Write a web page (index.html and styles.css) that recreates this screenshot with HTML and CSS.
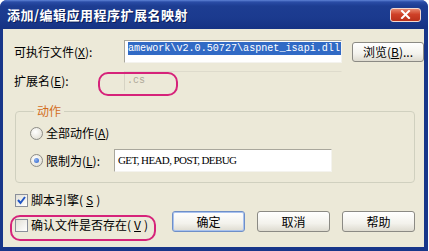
FILE: index.html
```html
<!DOCTYPE html>
<html lang="zh-CN">
<head>
    <meta charset="UTF-8">
    <title>添加/编辑应用程序扩展名映射</title>
    <link rel="stylesheet" href="styles.css">
</head>
<body>
    <div class="window">
        <!-- 标题栏 -->
        <div class="titlebar">
            <span class="title">添加/编辑应用程序扩展名映射</span>
            <button class="close-btn">
                <svg width="11" height="9" viewBox="0 0 11 9">
                    <path d="M2 1 L9 8 M9 1 L2 8" stroke="#fff" stroke-width="2" stroke-linecap="square"/>
                </svg>
            </button>
        </div>

        <!-- 客户区 -->
        <div class="client">
            <div class="form-row row-exe">
                <label class="label">可执行文件(<u>X</u>):</label>
                <div class="edit edit-exe"><span class="selected">amework\v2.0.50727\aspnet_isapi.dll</span></div>
                <button class="btn">浏览(<u>B</u>)...</button>
            </div>

            <div class="form-row row-ext">
                <label class="label">扩展名(<u>E</u>):</label>
                <div class="edit edit-disabled">.cs</div>
            </div>

            <fieldset class="group">
                <legend>动作</legend>
                <div class="radio-row">
                    <span class="radio"></span>
                    <span class="radio-label">全部动作(<u>A</u>)</span>
                </div>
                <div class="radio-row row-verbs">
                    <span class="radio checked"></span>
                    <span class="radio-label fixed">限制为(<u>L</u>):</span>
                    <div class="edit edit-verbs">GET, HEAD, POST, DEBUG</div>
                </div>
            </fieldset>

            <div class="check-row">
                <span class="checkbox">
                    <svg width="11" height="11" viewBox="0 0 11 11">
                        <path d="M2 5 L4.5 8 L9 2" fill="none" stroke="#2155c4" stroke-width="2"/>
                    </svg>
                </span>
                脚本引擎(<u>S</u>)
            </div>

            <div class="bottom-row">
                <div class="check-row verify">
                    <span class="checkbox"></span>
                    确认文件是否存在(<u>V</u>)
                </div>
                <div class="buttons">
                    <button class="btn btn-default">确定</button>
                    <button class="btn">取消</button>
                    <button class="btn">帮助</button>
                </div>
            </div>

            <!-- 标注圈 -->
            <span class="mark mark-ext"></span>
            <span class="mark mark-verify"></span>
        </div>
    </div>
</body>
</html>
```

FILE: styles.css
```css
* {
    margin: 0;
    padding: 0;
    box-sizing: border-box;
}

body {
    background-color: #ffffff;
    font-family: "Noto Sans CJK SC", sans-serif;
    font-size: 12px;
    color: #000;
}

u {
    text-decoration: underline;
}

/* 窗口外框 */
.window {
    width: 428px;
    height: 251px;
    display: flex;
    flex-direction: column;
    background-color: #183689;
    border-radius: 7px 7px 0 0;
    overflow: hidden;
}

/* 标题栏 */
.titlebar {
    flex: none;
    height: 29px;
    display: flex;
    align-items: center;
    padding: 0 7px;
    background: linear-gradient(#5f83d6 0, #2a4ca6 2px, #1d3d92 6px, #1b3a8e 18px, #153283 29px);
}

.title {
    flex: 1;
    color: #fff;
    font-weight: bold;
    font-size: 13px;
    line-height: 14px;
    letter-spacing: 0.5px;
    text-shadow: 1px 1px 0 #0a1d58;
}

.close-btn {
    width: 31px;
    height: 14px;
    display: flex;
    align-items: center;
    justify-content: center;
    border: 1px solid #f2d8d0;
    border-radius: 3px;
    background: linear-gradient(#e8866c, #cf4128 45%, #b9301a);
}

/* 客户区 */
.client {
    position: relative;
    flex: 1;
    margin: 0 4px 4px 3px;
    padding: 11px 9px 0 11px;
    background-color: #ece9d8;
}

.form-row {
    display: grid;
    grid-template-columns: 100px 218px 72px;
    column-gap: 10px;
    align-items: center;
}

.row-exe {
    height: 23px;
}

.row-ext {
    height: 21px;
    margin-top: 7px;
}

.label {
    line-height: 14px;
}

/* 文本框 */
.edit {
    height: 23px;
    border: 1px solid;
    border-color: #a9a79c #f4f3ee #f4f3ee #a9a79c;
    background-color: #fff;
    overflow: hidden;
    white-space: nowrap;
}

.edit-exe {
    display: flex;
    justify-content: flex-end;
    align-items: flex-start;
    padding: 1px 0 0 2px;
    font-family: "Liberation Mono", monospace;
    font-size: 10.1px;
}

.selected {
    line-height: 13px;
    padding-right: 1px;
    background-color: #316ac5;
    color: #fff;
}

.edit-disabled {
    height: 20px;
    border-color: #dedbcc transparent transparent #d6d3c4;
    background-color: transparent;
    padding: 2px 0 0 2px;
    color: #aca899;
    font-family: "Liberation Mono", monospace;
    font-size: 10px;
    line-height: 14px;
}

.edit-verbs {
    width: 218px;
    padding: 4px 0 0 3px;
    font-family: "Liberation Serif", serif;
    font-size: 11px;
    letter-spacing: -0.6px;
    line-height: 13px;
}

/* 分组框 */
.group {
    margin: 13px 0 0 1px;
    width: 400px;
    border: 1px solid #d0d0bf;
    border-radius: 4px;
    padding: 7px 0 10px 14px;
}

.group legend {
    margin-left: 4px;
    padding: 0 3px;
    line-height: 14px;
    color: #d36d1c;
}

.radio-row {
    display: flex;
    align-items: center;
    height: 16px;
}

.row-verbs {
    height: 23px;
    margin-top: 8px;
}

.radio {
    flex: none;
    width: 13px;
    height: 13px;
    border: 1px solid #8d8c86;
    border-radius: 50%;
    background: radial-gradient(circle at 40% 35%, #ffffff, #dcd9cc);
    position: relative;
}

.radio.checked::after {
    content: "";
    position: absolute;
    top: 3px;
    left: 3px;
    width: 5px;
    height: 5px;
    border-radius: 50%;
    background: radial-gradient(circle at 35% 35%, #8fb3f0, #2a5fc9);
}

.radio-label {
    margin-left: 3px;
    line-height: 14px;
}

.radio-label.fixed {
    width: 68px;
}

/* 复选框 */
.check-row {
    display: flex;
    align-items: center;
    gap: 3px;
    height: 16px;
    margin-top: 9px;
    padding-left: 1px;
    line-height: 14px;
}

.checkbox {
    flex: none;
    width: 13px;
    height: 13px;
    display: flex;
    align-items: center;
    justify-content: center;
    border: 1px solid #8a8f9a;
    background: linear-gradient(135deg, #e2e0d6, #ffffff);
}

.bottom-row {
    display: flex;
    align-items: flex-start;
    margin-top: 3px;
}

.check-row.verify {
    margin-top: 6px;
}

.buttons {
    margin-left: auto;
    display: flex;
    gap: 12px;
}

/* 按钮 */
.btn {
    width: 73px;
    height: 21px;
    border: 1px solid #8b8a84;
    border-radius: 3px;
    background: linear-gradient(#ffffff, #f3f2ec 60%, #dedbd0);
    font-family: inherit;
    font-size: 12px;
    line-height: 14px;
    color: #000;
}

.row-exe .btn {
    width: 72px;
    height: 20px;
}

.btn-default {
    border-color: #6e8fc8;
    box-shadow: inset 0 0 0 1px #a9c2ee;
}

/* 标注圈 */
.mark {
    position: absolute;
    border: 2px solid #d6237a;
    border-radius: 10px;
    pointer-events: none;
}

.mark-ext {
    left: 95px;
    top: 43px;
    width: 80px;
    height: 24px;
}

.mark-verify {
    left: 7px;
    top: 186px;
    width: 146px;
    height: 26px;
}
```
